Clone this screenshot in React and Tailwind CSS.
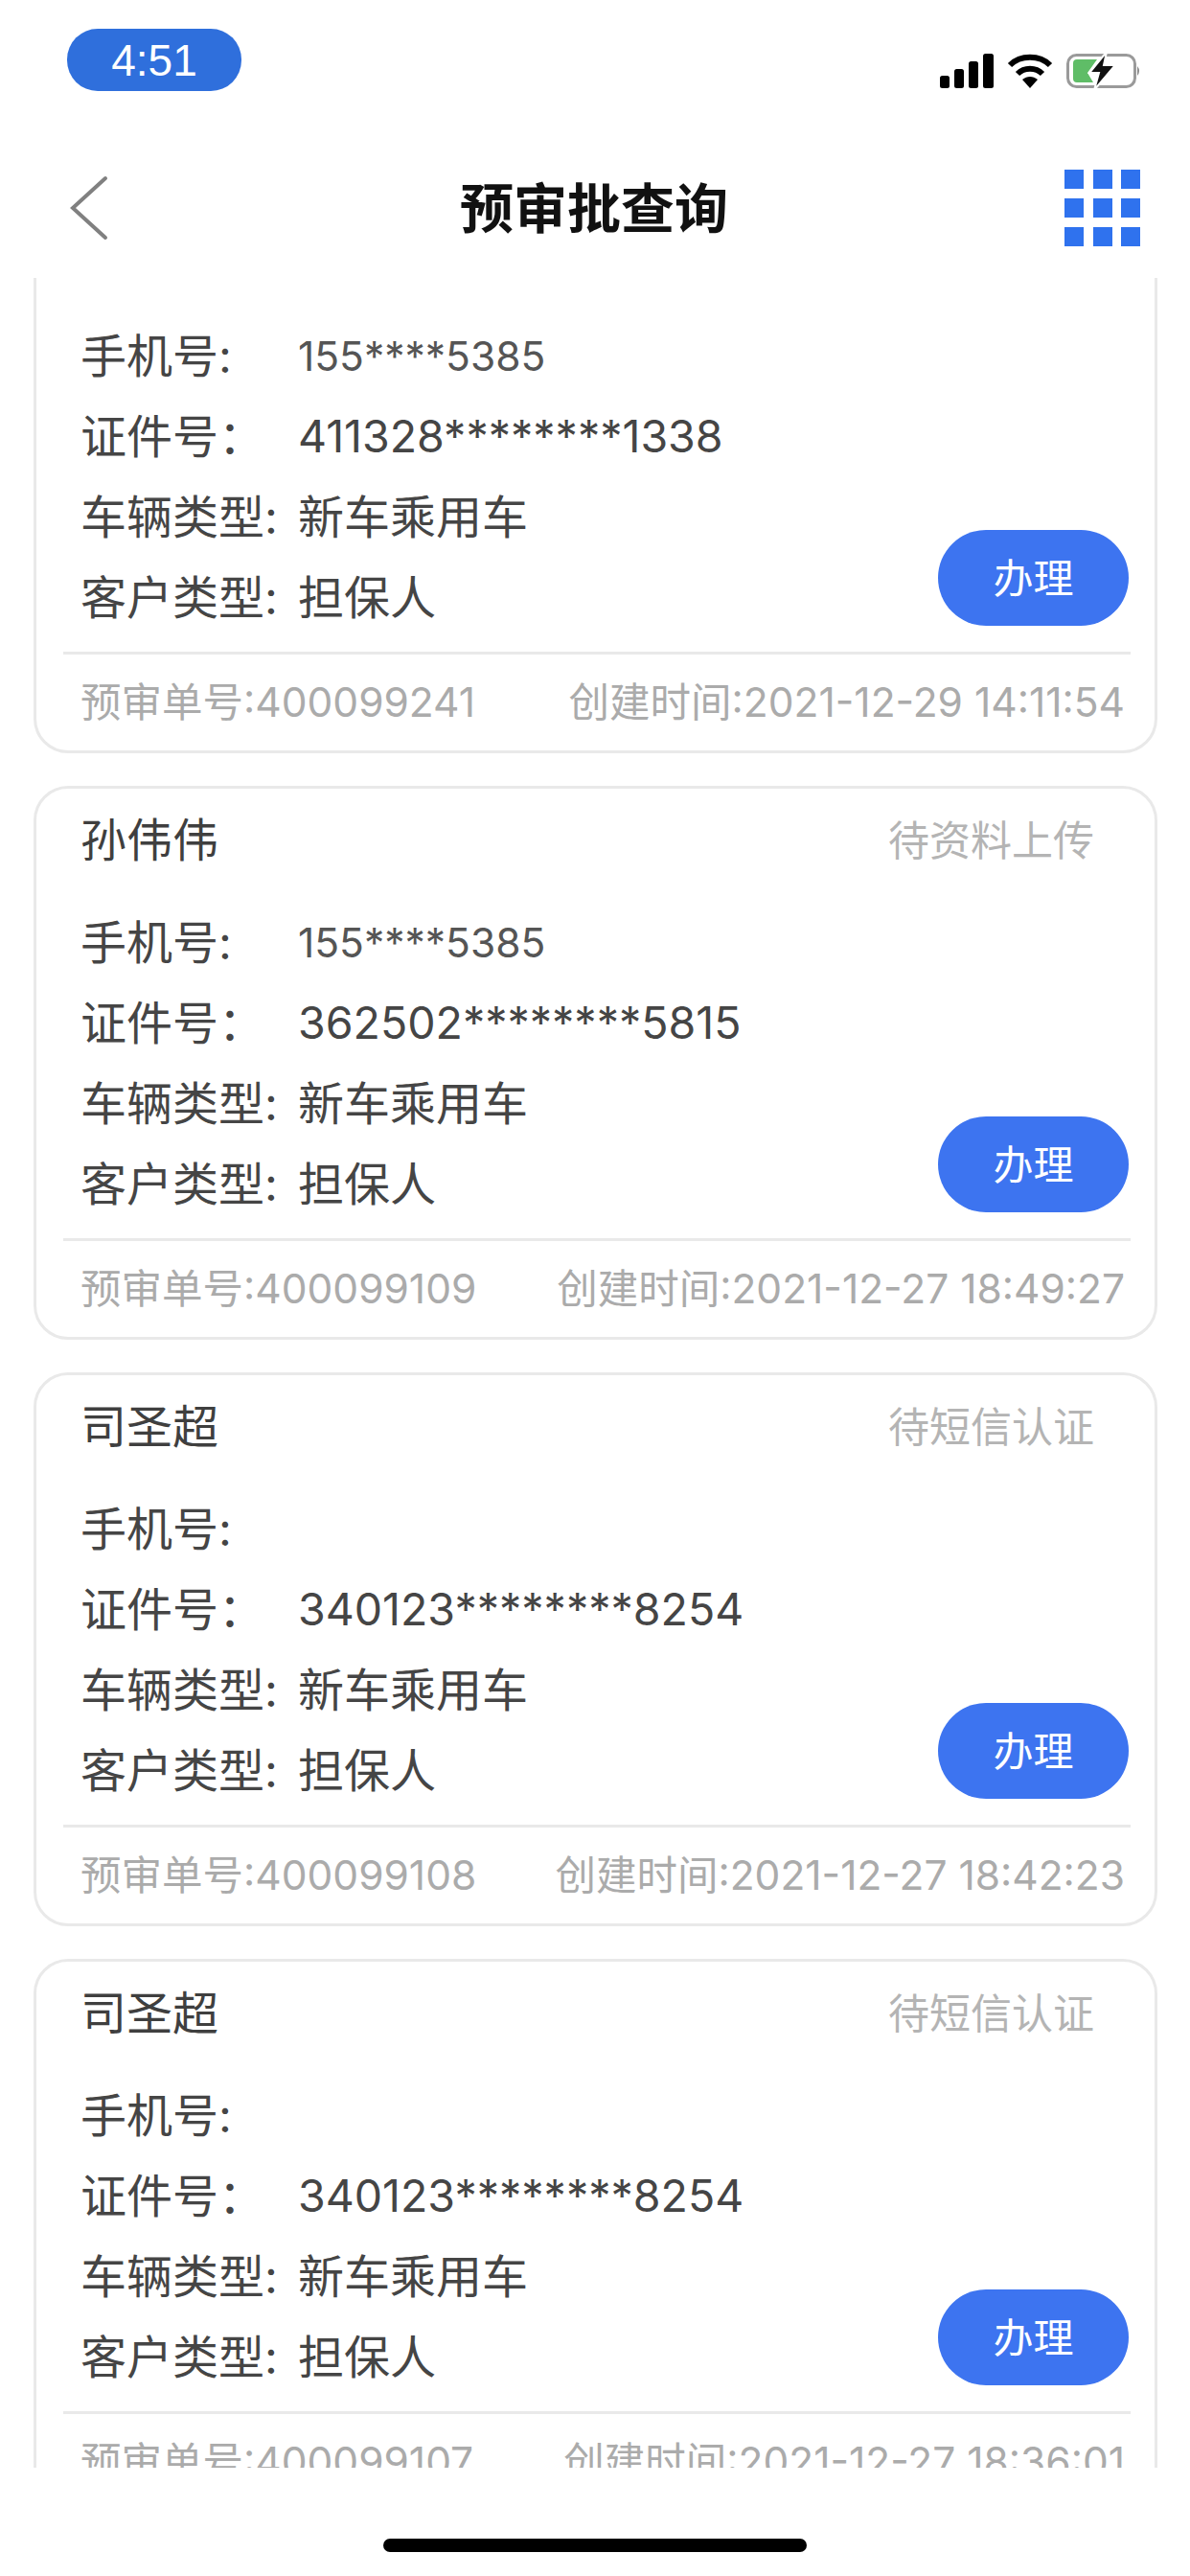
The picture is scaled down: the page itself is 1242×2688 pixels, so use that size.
import React from 'react'

const cards = [
  { name: '', status: '', phone: '155****5385', id: '411328********1338', no: '400099241', time: '2021-12-29 14:11:54' },
  { name: '孙伟伟', status: '待资料上传', phone: '155****5385', id: '362502********5815', no: '400099109', time: '2021-12-27 18:49:27' },
  { name: '司圣超', status: '待短信认证', phone: '', id: '340123********8254', no: '400099108', time: '2021-12-27 18:42:23' },
  { name: '司圣超', status: '待短信认证', phone: '', id: '340123********8254', no: '400099107', time: '2021-12-27 18:36:01' },
]

function StatusIcons() {
  return (
    <div className="flex items-center gap-[14px]">
      <svg width="56" height="36" viewBox="0 0 56 36" fill="#000">
        <rect x="0" y="23" width="10" height="13" rx="2.5" />
        <rect x="15" y="16" width="10" height="20" rx="2.5" />
        <rect x="30" y="8" width="10" height="28" rx="2.5" />
        <rect x="45" y="0" width="11" height="36" rx="2.5" />
      </svg>
      <svg width="48" height="36" viewBox="0 0 48 36" fill="none" stroke="#000" strokeWidth="6">
        <path d="M3 12 C14 1 34 1 45 12" />
        <path d="M11 21 C18 14 30 14 37 21" />
        <path d="M16 27 L24 36 L32 27 C27 23 21 23 16 27 Z" fill="#000" stroke="none" />
      </svg>
      <svg width="78" height="40" viewBox="0 0 78 40" fill="none">
        <rect x="1.5" y="3.5" width="70" height="33" rx="9" stroke="#9a9a9a" strokeWidth="3" />
        <path d="M7 12 Q7 8 11 8 L32 8 L22 22 L28 32 L11 32 Q7 32 7 28 Z" fill="#5fbd67" />
        <path d="M74 15 Q78 20 74 25 Z" fill="#8a8a8a" />
        <path d="M42 0 L24 22 L34 22 L29 40 L51 14 L39 14 Z" fill="#111" stroke="#fff" strokeWidth="2" />
      </svg>
    </div>
  )
}

function MenuGrid() {
  return (
    <div className="grid grid-cols-3 gap-x-[9.5px] gap-y-[10px]">
      {Array.from({ length: 9 }).map((_, i) => (
        <div key={i} className="w-5 h-5 bg-[#2f72ee]" />
      ))}
    </div>
  )
}

function Row({ label, children, className }) {
  return (
    <div className="flex items-center h-[84px]">
      <span className="w-[227px] shrink-0 text-[48px] text-[#454545]">{label}</span>
      <span className={className}>{children}</span>
    </div>
  )
}

function Card({ card }) {
  return (
    <div className="h-[578px] border-[3px] border-[#e9e9e9] rounded-[36px] bg-white flex flex-col">
      <div className="flex items-center justify-between h-[60px] mt-[24px] pl-[46px] pr-[63px]">
        <span className="text-[48px] text-[#3f3f3f]">{card.name}</span>
        <span className="text-[43px] text-[#b4b4b4]">{card.status}</span>
      </div>
      <div className="flex items-end justify-between mt-[35px] pl-[46px] pr-[27px]">
        <div>
          <Row label="手机号:" className="text-[42.5px] text-[#555]">{card.phone}</Row>
          <Row label="证件号：" className="text-[46.5px] text-[#454545]">{card.id}</Row>
          <Row label="车辆类型:" className="text-[48px] text-[#454545]">新车乘用车</Row>
          <Row label="客户类型:" className="text-[48px] text-[#454545]">担保人</Row>
        </div>
        <button className="w-[199px] h-[100px] mb-[13px] rounded-full bg-[#3d74f0] text-white text-[42px]">办理</button>
      </div>
      <div className="h-[3px] mt-[14px] ml-[28px] mr-[25px] bg-[#e9e9e9]" />
      <div className="flex items-center justify-between h-[100px] pl-[46px] pr-[31px] text-[#ababab] text-[42.5px]">
        <span>预审单号:{card.no}</span>
        <span>创建时间:{card.time}</span>
      </div>
    </div>
  )
}

export default function App() {
  return (
    <div className="w-[1242px] h-[2688px] bg-white flex flex-col overflow-hidden font-['Inter','Noto_Sans_CJK_SC',sans-serif]">
      {/* status bar */}
      <div className="h-[140px] shrink-0 flex items-start justify-between pl-[70px] pr-[51px]">
        <div className="mt-[30px] w-[182px] h-[65px] pt-[2px] rounded-[32px] bg-[#2f6fdc] text-white text-[46px] flex items-center justify-center font-['Liberation_Sans',sans-serif]">
          4:51
        </div>
        <div className="mt-[54px]">
          <StatusIcons />
        </div>
      </div>

      {/* nav */}
      <div className="h-[150px] shrink-0 grid grid-cols-[408px_auto_1fr] items-center pl-[72px] pr-[52px]">
        <svg className="mt-[3px]" width="42" height="68" viewBox="0 0 42 68" fill="none" stroke="#808080" strokeWidth="4" strokeLinecap="round">
          <path d="M38 3 L4 34 L38 65" />
        </svg>
        <h1 className="pt-[5px] text-[56px] leading-none font-bold text-[#111]">预审批查询</h1>
        <div className="flex justify-end pt-[4px]">
          <MenuGrid />
        </div>
      </div>

      {/* list is scrolled a bit */}
      <div className="h-[2285px] shrink-0 overflow-hidden pl-[35px] pr-[34px]">
        <div className="mt-[-82px] flex flex-col gap-[34px]">
          {cards.map((c, i) => (
            <Card key={i} card={c} />
          ))}
        </div>
      </div>

      {/* home indicator */}
      <div className="flex-1 flex justify-center pt-[74px]">
        <div className="w-[442px] h-[14px] rounded-full bg-black" />
      </div>
    </div>
  )
}
